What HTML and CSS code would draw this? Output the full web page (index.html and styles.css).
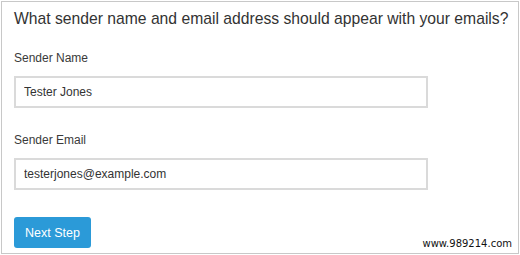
FILE: index.html
```html
<!DOCTYPE html>
<html>
<head>
    <title>Sender Details</title>
    <link rel="stylesheet" href="styles.css">
</head>
<body>
    <div class="panel">
        <h3>What sender name and email address should appear with your emails?</h3>
        <div class="field name-field">
            <label for="sender-name">Sender Name</label>
            <input type="text" id="sender-name" value="Tester Jones">
        </div>
        <div class="field email-field">
            <label for="sender-email">Sender Email</label>
            <input type="text" id="sender-email" value="testerjones@example.com">
        </div>
        <button>Next Step</button>
        <div class="watermark">www.989214.com</div>
    </div>
</body>
</html>
```

FILE: styles.css
```css
body {
    margin: 0;
    padding: 1px;
    font-family: "Liberation Sans", Arial, sans-serif;
    color: #333;
}
.panel {
    position: relative;
    box-sizing: border-box;
    width: 518px;
    height: 253px;
    border: 1px solid #c8c8c8;
    padding: 7px 12px 0;
    background: #fff;
    overflow: hidden;
}
h3 {
    margin: 0;
    font-size: 15.7px;
    font-weight: normal;
    line-height: 20px;
    white-space: nowrap;
    color: #333;
}
.field {
    display: flex;
    flex-direction: column;
    align-items: flex-start;
}
.name-field {
    margin-top: 22px;
}
.email-field {
    margin-top: 25px;
}
label {
    font-size: 12px;
    line-height: 14px;
    margin-bottom: 11px;
    color: #3a3a3a;
}
input {
    box-sizing: border-box;
    width: 414px;
    height: 32px;
    border: 2px solid #dadada;
    padding: 0 8px;
    font-family: inherit;
    font-size: 12px;
    color: #333;
    outline: none;
}
button {
    display: block;
    margin-top: 27px;
    width: 77px;
    height: 31px;
    border: none;
    border-radius: 3px;
    background: #2b9ad8;
    color: #fff;
    font-family: inherit;
    font-size: 12.5px;
    padding: 0;
}
.watermark {
    position: absolute;
    right: 6px;
    bottom: 4px;
    font-family: "DejaVu Sans", Verdana, sans-serif;
    font-size: 10px;
    color: #111;
}
```
